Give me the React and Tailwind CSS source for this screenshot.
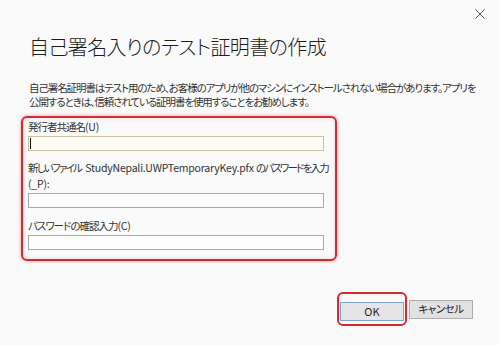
const jp = "font-['Noto_Sans_CJK_JP','Noto_Sans_CJK_SC',sans-serif] [font-feature-settings:'palt']";

const Field = ({ focused }) => (
  <div
    className={
      'mt-[1px] h-[15px] w-[296px] border flex items-center ' +
      (focused ? 'border-[#c9c19c] bg-[#fcfcf5]' : 'border-[#a9a9a9] bg-[#fdfdfd]')
    }
  >
    {focused && <span className="ml-[1px] h-[11px] w-px bg-[#111]" />}
  </div>
);

const App = () => {
  return (
    <div className={`w-[500px] h-[345px] bg-[#fafafa] flex flex-col text-[#2b2b2b] ${jp}`}>
      <div className="flex justify-end pt-[9px] pr-[15px]">
        <svg width="10" height="10" viewBox="0 0 10 10" className="text-[#555]">
          <path d="M0.5 0.5L9.5 9.5M9.5 0.5L0.5 9.5" stroke="currentColor" strokeWidth="1" />
        </svg>
      </div>

      <h1 className="mt-[14px] pl-[29px] text-[20px] leading-[28px] font-light tracking-[-0.6px] text-[#1c1c1c] whitespace-nowrap">
        自己署名入りのテスト証明書の作成
      </h1>

      <p className="mt-[20px] pl-[29px] text-[10.5px] leading-[14px] tracking-[-1.1px] text-[#333] whitespace-nowrap">
        自己署名証明書はテスト用のため、お客様のアプリが他のマシンにインストールされない場合があります。アプリを
        <br />
        公開するときは、信頼されている証明書を使用することをお勧めします。
      </p>

      <div className="mt-[7px] ml-[21px] w-[316px] h-[145px] border-2 border-[#d62a32] rounded-[6px] pl-[5px] pt-px shadow-[0_0_3px_1px_rgba(230,90,90,0.35),inset_0_0_5px_rgba(0,0,0,0.12)]">
        <div className="text-[10.5px] leading-[16px] tracking-[-1px] text-[#333] whitespace-nowrap">
          発行者共通名<span className="tracking-[-0.2px]">(U)</span>
        </div>
        <Field focused />

        <div className="mt-[9px] text-[10.5px] leading-[16px] tracking-[-1.8px] text-[#333] whitespace-nowrap">
          新しいファイル
          <span className="pl-[2px] tracking-[-0.2px]">{' StudyNepali.UWPTemporaryKey.pfx '}</span>
          のパスワードを入力
          <br />
          <span className="tracking-[-0.2px]">(_P):</span>
        </div>
        <Field />

        <div className="mt-[10px] text-[10.5px] leading-[16px] tracking-[-1px] text-[#333] whitespace-nowrap">
          パスワードの確認入力<span className="tracking-[-0.2px]">(C)</span>
        </div>
        <Field />
      </div>

      <div className="mt-[31px] flex justify-end items-center gap-[2px] pr-[27px]">
        <div className="border-2 border-[#d62a32] rounded-[6px] px-px py-[3px]">
          <button className="w-[64px] h-[19px] bg-[#e5e5e5] border border-[#7fa3cf] text-[11px] leading-none text-[#222]">
            OK
          </button>
        </div>
        <button className="w-[64px] h-[19px] bg-[#e1e1e1] border border-[#adadad] text-[10.5px] leading-none tracking-[-0.5px] text-[#222]">
          キャンセル
        </button>
      </div>
    </div>
  );
};

export default App;
